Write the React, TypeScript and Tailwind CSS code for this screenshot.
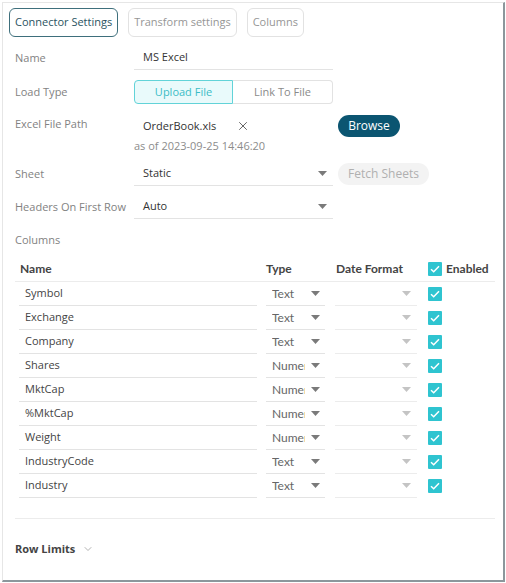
import { ChevronDown, X } from "lucide-react";

const rows = [
  { name: "Symbol", type: "Text" },
  { name: "Exchange", type: "Text" },
  { name: "Company", type: "Text" },
  { name: "Shares", type: "Numeric" },
  { name: "MktCap", type: "Numeric" },
  { name: "%MktCap", type: "Numeric" },
  { name: "Weight", type: "Numeric" },
  { name: "IndustryCode", type: "Text" },
  { name: "Industry", type: "Text" },
];

function Caret({ light }: { light?: boolean }) {
  return (
    <svg width="9" height="5" viewBox="0 0 9 5" className="shrink-0">
      <path d="M0 0h9L4.5 5z" fill={light ? "#c4c4c4" : "#7a7a7a"} />
    </svg>
  );
}

function Check() {
  return (
    <div className="w-[14px] h-[14px] bg-[#2fc4d0] rounded-[1px] flex items-center justify-center shrink-0">
      <svg width="10" height="8" viewBox="0 0 10 8">
        <path d="M1 4.2l2.7 2.6L9 1.2" fill="none" stroke="white" strokeWidth="1.5" />
      </svg>
    </div>
  );
}

function Label({ children }: { children: React.ReactNode }) {
  return <div className="w-[119px] shrink-0 text-[11px] text-[#828282] whitespace-nowrap">{children}</div>;
}

export default function App() {
  return (
    <div className="w-[506px] h-[583px] bg-white pl-[2px] pt-[2px] font-['Open_Sans',sans-serif]">
      <div className="w-[503px] h-[580px] border-l border-t border-[#e6e6e6] border-r-2 border-b-2 border-r-[#8c979c] border-b-[#8c979c] flex flex-col">
        {/* tabs */}
        <div className="flex gap-[10px] pl-[6px] mt-[5px]">
          <div className="h-[29px] px-[5px] flex items-center rounded-[6px] border border-[#3e6f7c] text-[11px] text-[#2a5361]">
            Connector Settings
          </div>
          <div className="h-[29px] px-[5px] flex items-center rounded-[6px] border border-[#e2e2e2] text-[11px] text-[#969696]">
            Transform settings
          </div>
          <div className="h-[29px] px-[5px] flex items-center rounded-[6px] border border-[#e2e2e2] text-[11px] text-[#969696]">
            Columns
          </div>
        </div>

        <div className="pl-[12px] flex flex-col">
          {/* Name */}
          <div className="flex items-center mt-[9px] h-[24px]">
            <Label>Name</Label>
            <div className="w-[199px] h-[24px] flex items-center pl-[9px] border-b border-[#e3e3e3] text-[11px] text-[#333]">
              MS Excel
            </div>
          </div>

          {/* Load Type */}
          <div className="flex items-center mt-[10px] h-[24px]">
            <Label>Load Type</Label>
            <div className="flex w-[199px] h-[24px] text-[11px]">
              <div className="w-[99px] flex items-center justify-center bg-[#e9fafb] border border-[#62d3d8] rounded-l-[4px] text-[#3bbcc6]">
                Upload File
              </div>
              <div className="flex-1 flex items-center justify-center border border-l-0 border-[#e2e2e2] rounded-r-[4px] text-[#8a8a8a]">
                Link To File
              </div>
            </div>
          </div>

          {/* Excel File Path */}
          <div className="flex items-start mt-[10px]">
            <Label>
              <div className="leading-[20px]">Excel File Path</div>
            </Label>
            <div className="w-[199px] flex flex-col">
              <div className="h-[24px] flex items-center pl-[9px] text-[11px] text-[#333]">
                <span className="w-[93px]">OrderBook.xls</span>
                <X size={14} strokeWidth={1.4} className="text-[#444]" />
              </div>
              <div className="h-[16px] flex items-center text-[11px] text-[#8c8c8c]">as of 2023-09-25 14:46:20</div>
            </div>
            <div className="ml-[5px] mt-[1px] h-[22px] w-[62px] rounded-full bg-[#0b5571] text-white text-[12px] flex items-center justify-center">
              Browse
            </div>
          </div>

          {/* Sheet */}
          <div className="flex items-center mt-[8px] h-[24px]">
            <Label>Sheet</Label>
            <div className="w-[199px] h-[24px] flex items-center justify-between pl-[9px] pr-[6px] border-b border-[#e3e3e3] text-[11px] text-[#333]">
              Static
              <Caret />
            </div>
            <div className="ml-[5px] h-[22px] w-[91px] rounded-full bg-[#f3f3f3] text-[#b0b0b0] text-[12px] flex items-center justify-center">
              Fetch Sheets
            </div>
          </div>

          {/* Headers */}
          <div className="flex items-center mt-[9px] h-[24px]">
            <Label>Headers On First Row</Label>
            <div className="w-[199px] h-[24px] flex items-center justify-between pl-[9px] pr-[6px] border-b border-[#e3e3e3] text-[11px] text-[#333]">
              Auto
              <Caret />
            </div>
          </div>

          {/* Columns */}
          <div className="mt-[13px] h-[16px] flex items-center text-[11px] text-[#828282]">Columns</div>

          {/* table */}
          <div className="mt-[8px] w-[480px]">
            <div className="h-[26px] flex items-center border-b border-[#ececec] font-['Lato',sans-serif] font-bold text-[12px] text-[#444]">
              <div className="w-[251px] pl-[5px]">Name</div>
              <div className="w-[70px]">Type</div>
              <div className="w-[92px]">Date Format</div>
              <div className="flex items-center gap-[4px]">
                <Check />
                <span>Enabled</span>
              </div>
            </div>
            {rows.map((r) => (
              <div key={r.name} className="h-[24px] flex items-center pl-[4px] text-[11px]">
                <div className="w-[238px] h-[24px] flex items-center pl-[6px] border-b border-[#e3e3e3] text-[#444]">
                  {r.name}
                </div>
                <div className="ml-[9px] w-[59px] h-[24px] flex items-center pl-[6px] pr-[5px] border-b border-[#e3e3e3] font-['Lato',sans-serif] text-[12px] text-[#666]">
                  <span className="w-[33px] overflow-hidden whitespace-nowrap">{r.type}</span>
                  <span className="ml-auto">
                    <Caret />
                  </span>
                </div>
                <div className="ml-[10px] w-[82px] h-[24px] flex items-center justify-end pr-[6px] border-b border-[#ececec]">
                  <Caret light />
                </div>
                <div className="ml-[11px]">
                  <Check />
                </div>
              </div>
            ))}
          </div>

          <div className="mt-[20px] w-[480px] border-t border-[#ececec]" />

          <div className="mt-[22px] h-[16px] flex items-center gap-[7px] text-[11px] font-bold text-[#444]">
            Row Limits
            <ChevronDown size={12} strokeWidth={1.5} className="text-[#999]" />
          </div>
        </div>
      </div>
    </div>
  );
}
